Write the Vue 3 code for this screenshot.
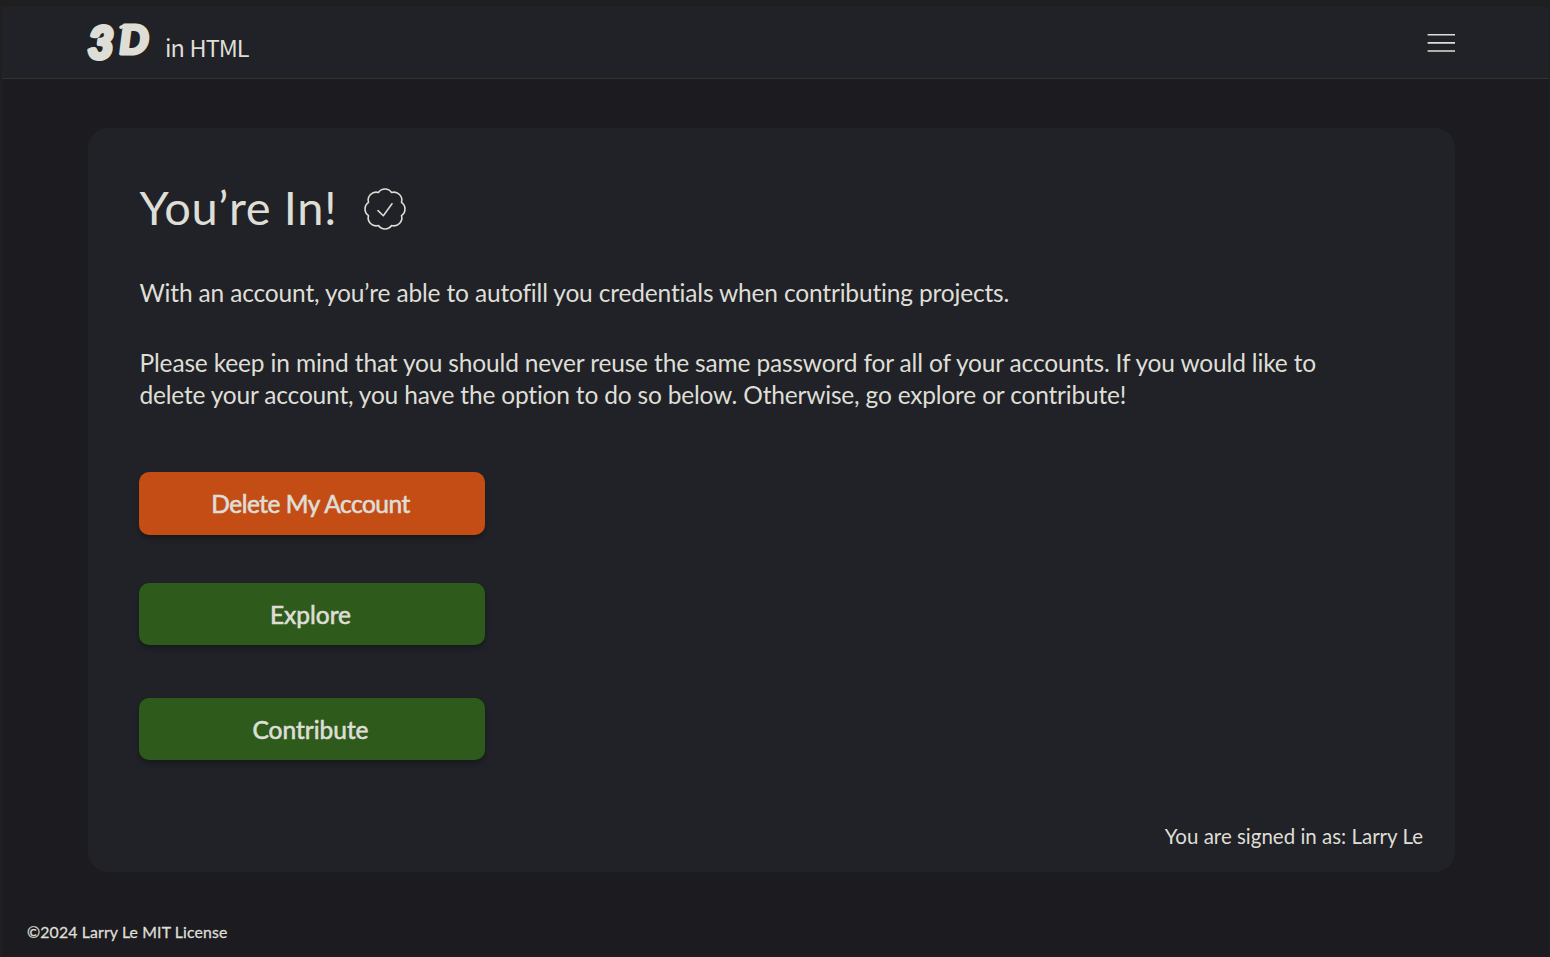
<script setup>
const actions = [
  { label: 'Delete My Account', kind: 'danger' },
  { label: 'Explore', kind: 'explore' },
  { label: 'Contribute', kind: 'contribute' },
]
</script>

<template>
  <div class="page">
    <header class="topbar">
      <div class="brand">
        <svg class="logo" width="78" height="71" viewBox="0 0 78 71">
          <text class="glyph" transform="translate(0.8 52)" font-size="45">3</text>
          <text class="glyph dee" transform="translate(32.3 47.2) scale(1.04 1)" font-size="40">D</text>
          <path d="M33.8 20.4Q35.5 18.4 41 18.8L38 24" stroke="#deded6" stroke-width="3.2" stroke-linecap="round" fill="none" />
        </svg>
        <span class="tagline">in HTML</span>
      </div>
      <svg class="menu" width="28" height="20" viewBox="0 0 28 20">
        <path d="M0.6 1.8H28M0.6 9.9H28M0.6 18H28" stroke="#deded6" stroke-width="1.6" />
      </svg>
    </header>

    <main class="card">
      <div class="heading">
        <h1>You’re In!</h1>
        <svg class="badge" width="44" height="44" viewBox="0 0 44 44" fill="none" stroke="#deded6" stroke-linecap="round" stroke-linejoin="round">
          <path stroke-width="1.6" d="M15.4 5.5A8 8 0 0 1 28.6 5.5A8 8 0 0 1 38.5 15.4A8 8 0 0 1 38.5 28.6A8 8 0 0 1 28.6 38.5A8 8 0 0 1 15.4 38.5A8 8 0 0 1 5.5 28.6A8 8 0 0 1 5.5 15.4A8 8 0 0 1 15.4 5.5Z" />
          <path stroke-width="1.5" d="M15 23.6L20.3 28.8L29 16.7" />
        </svg>
      </div>
      <p class="lead">With an account, you’re able to autofill you credentials when contributing projects.</p>
      <p class="info">
        <span class="row row-a">Please keep in mind that you should never reuse the same password for all of your accounts. If you would like to</span>
        <span class="row row-b">delete your account, you have the option to do so below. Otherwise, go explore or contribute!</span>
      </p>
      <div class="actions">
        <button v-for="a in actions" :key="a.kind" :class="['btn', a.kind]"><span>{{ a.label }}</span></button>
      </div>
      <p class="signed"><span>You are signed in as: Larry Le</span></p>
    </main>

    <footer><span>©2024 Larry Le MIT License</span></footer>
  </div>
</template>

<style>
body { margin: 0; background: #1c1b1f; }
</style>

<style scoped>
.page {
  box-sizing: border-box;
  width: 1550px;
  height: 957px;
  border: solid #1f1f1f;
  border-width: 7px 1px 1px 2px;
  background: #1c1b1f;
  color: #deded6;
  font-family: Lato, sans-serif;
  font-variant-ligatures: none;
  overflow: hidden;
}
.topbar {
  box-sizing: border-box;
  height: 72px;
  padding: 0 94px 0 85px;
  display: flex;
  justify-content: space-between;
  background: #212227;
  border-bottom: 1px solid #32332f;
}
.brand { display: flex; height: 71px; white-space: nowrap; }
.logo { width: 78px; flex: none; }
.glyph {
  font-family: Lato, sans-serif;
  font-weight: 900;
  font-style: italic;
  fill: #deded6;
  stroke: #deded6;
  stroke-width: 4px;
  stroke-linejoin: round;
}
.dee { stroke-width: 3px; }
.tagline {
  font-family: "Noto Sans CJK JP", "Noto Sans", sans-serif;
  font-size: 23.5px;
  line-height: 80px;
  letter-spacing: -1px;
  word-spacing: 1.5px;
}
.menu { margin-top: 26px; }
.card {
  box-sizing: border-box;
  width: 1367px;
  height: 744px;
  margin: 49px 0 0 86px;
  padding: 52px 32px 0 51.5px;
  border-radius: 20px;
  background: #212227;
  white-space: nowrap;
}
.heading { display: flex; align-items: flex-start; height: 58px; gap: 26px; }
h1 { margin: 0; width: 197px; font-size: 47px; font-weight: 400; line-height: 55px; letter-spacing: 0.6px; }
.badge { margin-top: 7px; margin-left: 0.5px; }
p { margin: 0; }
.lead, .info { font-size: 24.5px; line-height: 32px; }
.lead { margin-top: 39px; letter-spacing: -0.165px; }
.info { margin-top: 38px; }
.row { display: block; }
.row-a { letter-spacing: -0.16px; }
.row-b { letter-spacing: -0.19px; }
.actions { display: flex; flex-direction: column; margin: 61px 0 0 -0.5px; }
.btn {
  width: 346px;
  height: 62px;
  border: 0;
  border-radius: 10px;
  padding: 1px 3px 0 0;
  background: #2e5b1c;
  color: #deded6;
  font: 400 24.5px/61px Lato, sans-serif;
  -webkit-text-stroke: 0.6px #deded6;
  box-shadow: 0 4px 4px rgba(0, 0, 0, 0.25);
}
.danger { height: 63px; padding: 0 3px 1px 0; background: #c44d16; letter-spacing: -0.5px; }
.explore { margin-top: 48px; }
.contribute { margin-top: 53px; }
.signed { margin-top: 63px; text-align: right; font-size: 20.5px; line-height: 26px; }
footer { margin: 50px 0 0 25px; font-size: 15.8px; line-height: 20px; letter-spacing: 0.15px; -webkit-text-stroke: 0.3px #deded6; }
</style>
